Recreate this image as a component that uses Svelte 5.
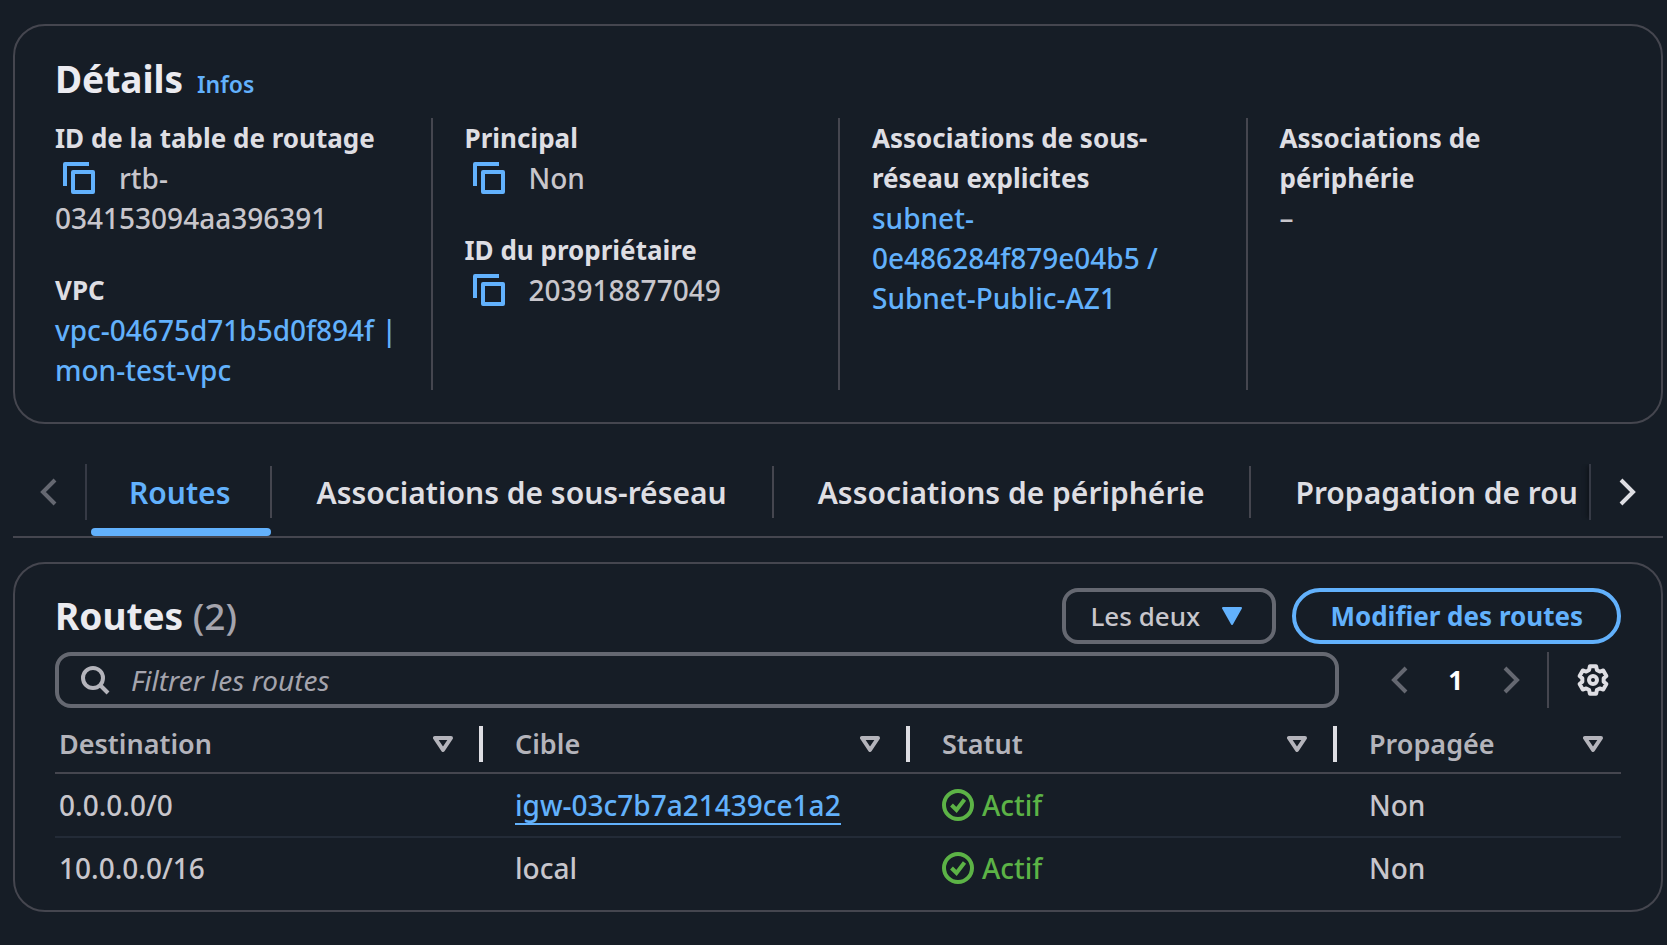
<script>
  const tabs = [
    'Routes',
    'Associations de sous-réseau',
    'Associations de périphérie',
    'Propagation de rou',
  ];
  let active = $state('Routes');
  let filter = $state('');
  let scope = $state('Les deux');

  const columns = ['Destination', 'Cible', 'Statut', 'Propagée'];
  const routes = [
    { destination: '0.0.0.0/0', target: 'igw-03c7b7a21439ce1a2', link: true, status: 'Actif', propagated: 'Non' },
    { destination: '10.0.0.0/16', target: 'local', link: false, status: 'Actif', propagated: 'Non' },
  ];
</script>

{#snippet copyButton(label)}
  <button class="copy" aria-label={label}>
    <svg viewBox="0 0 32 32" width="32" height="32" fill="none" stroke="currentColor" stroke-width="4" stroke-linejoin="round">
      <path d="M2 24V2h24" />
      <path d="M10 10h20v20H10z" />
    </svg>
  </button>
{/snippet}

{#snippet chevron(dir)}
  <svg class="chevron" viewBox="0 0 32 32" width="32" height="32" fill="none" stroke="currentColor" stroke-width="4">
    {#if dir === 'left'}
      <path d="M22 4 10 16l12 12" />
    {:else}
      <path d="M10 4l12 12-12 12" />
    {/if}
  </svg>
{/snippet}

<main>
  <section class="panel details">
    <header class="details-head">
      <h2>Détails</h2>
      <a class="info" href="#infos">Infos</a>
    </header>
    <div class="columns">
      <dl>
        <div>
          <dt>ID de la table de routage</dt>
          <dd>{@render copyButton('Copier l’ID de la table')}rtb-<wbr />034153094aa396391</dd>
        </div>
        <div>
          <dt>VPC</dt>
          <dd><a href="#vpc">vpc-04675d71b5d0f894f | mon-test-vpc</a></dd>
        </div>
      </dl>
      <dl>
        <div>
          <dt>Principal</dt>
          <dd>{@render copyButton('Copier la valeur')}Non</dd>
        </div>
        <div>
          <dt>ID du propriétaire</dt>
          <dd>{@render copyButton('Copier l’ID du propriétaire')}203918877049</dd>
        </div>
      </dl>
      <dl>
        <div>
          <dt>Associations de sous-réseau explicites</dt>
          <dd><a href="#subnet">subnet-<wbr />0e486284f879e04b5 / Subnet-Public-AZ1</a></dd>
        </div>
      </dl>
      <dl>
        <div>
          <dt>Associations de périphérie</dt>
          <dd>–</dd>
        </div>
      </dl>
    </div>
  </section>

  <nav class="tabs">
    <button class="scroll prev" aria-label="Onglets précédents" disabled>{@render chevron('left')}</button>
    <div class="tab-list" role="tablist">
      {#each tabs as tab}
        <button class="tab" class:active={tab === active} role="tab" aria-selected={tab === active} onclick={() => (active = tab)}>
          <span>{tab}</span>
        </button>
      {/each}
    </div>
    <button class="scroll next" aria-label="Onglets suivants">{@render chevron('right')}</button>
  </nav>

  <section class="panel routes">
    <header class="routes-head">
      <h2>Routes <span class="count">(2)</span></h2>
      <div class="actions">
        <div class="select">
          <select bind:value={scope} aria-label="Portée">
            <option>Les deux</option>
          </select>
          <svg viewBox="0 0 20 18" width="20" height="18" fill="currentColor" stroke="currentColor" stroke-width="2" stroke-linejoin="round">
            <path d="M1 1h18l-9 16z" />
          </svg>
        </div>
        <button class="edit">Modifier des routes</button>
      </div>
    </header>

    <div class="tools">
      <label class="search">
        <svg viewBox="0 0 32 32" width="32" height="32" fill="none" stroke="currentColor" stroke-width="4">
          <circle cx="14" cy="14" r="10" />
          <path d="M21 21l8 8" />
        </svg>
        <input type="search" placeholder="Filtrer les routes" aria-label="Filtrer les routes" bind:value={filter} />
      </label>
      <div class="pages">
        <button class="page-arrow" aria-label="Page précédente" disabled>{@render chevron('left')}</button>
        <button class="page">1</button>
        <button class="page-arrow" aria-label="Page suivante" disabled>{@render chevron('right')}</button>
      </div>
      <button class="settings" aria-label="Préférences">
        <svg viewBox="-16 -16 32 32" width="32" height="32" fill="none" stroke="currentColor" stroke-width="4" stroke-linejoin="round">
          <circle r="4" />
          <path d="M-3.150-13.640H3.150L3.870-10.080 6.800-8.390 10.240-9.550 13.390-4.090 10.670-1.690V1.690L13.390 4.090 10.240 9.550 6.800 8.390 3.870 10.080 3.150 13.640H-3.150L-3.870 10.080-6.800 8.390-10.240 9.550-13.390 4.090-10.670 1.690V-1.690L-13.390-4.090-10.240-9.550-6.800-8.390-3.870-10.080z" />
        </svg>
      </button>
    </div>

    <table>
      <thead>
        <tr>
          {#each columns as column}
            <th scope="col">
              <button class="sort">
                <span>{column}</span>
                <svg viewBox="0 0 20 18" width="20" height="18" fill="none" stroke="currentColor" stroke-width="4" stroke-linejoin="round">
                  <path d="M2 3h16l-8 12z" />
                </svg>
              </button>
            </th>
          {/each}
        </tr>
      </thead>
      <tbody>
        {#each routes as route}
          <tr>
            <td>{route.destination}</td>
            <td>
              {#if route.link}<a class="target" href="#igw">{route.target}</a>{:else}{route.target}{/if}
            </td>
            <td>
              <span class="status">
                <svg viewBox="0 0 32 32" width="32" height="32" fill="none" stroke="currentColor" stroke-width="4">
                  <circle cx="16" cy="16" r="14" />
                  <path d="M9.500 16l5 5 8-10.500" />
                </svg>
                {route.status}
              </span>
            </td>
            <td>{route.propagated}</td>
          </tr>
        {/each}
      </tbody>
    </table>
  </section>
</main>

<style>
  :global(body) {
    margin: 0;
    background: #161d26;
  }

  main {
    padding: 24px 4px 32px 13px;
    color: #c8c6cc;
    font: 500 28px/40px 'Noto Sans', 'Open Sans', sans-serif;
  }

  button,
  select,
  input {
    margin: 0;
    padding: 0;
    border: 0;
    background: none;
    color: inherit;
    font: inherit;
  }

  svg {
    display: block;
    flex: none;
  }

  h2,
  dl,
  dd {
    margin: 0;
  }

  h2 {
    color: #ebebf0;
    font-size: 37px;
    font-weight: 700;
    line-height: 50px;
  }

  a {
    color: #62b1fc;
    text-decoration: none;
  }

  .panel {
    box-sizing: border-box;
    border: 2px solid #45464f;
    border-radius: 32px;
    padding: 24px 40px 32px;
  }

  .details-head {
    display: flex;
    align-items: baseline;
    gap: 14px;
    padding: 4px 0 14px;
  }

  .info {
    font-size: 23px;
    font-weight: 600;
    line-height: 32px;
  }

  .columns {
    display: grid;
    grid-template-columns: repeat(4, minmax(0, 1fr));
    gap: 64px;
  }

  dl {
    display: flex;
    flex-direction: column;
    gap: 32px;
  }

  dl + dl {
    margin-left: -32px;
    border-left: 2px solid #45464f;
    padding-left: 32px;
  }

  dt {
    color: #dedee3;
    font-size: 26px;
    font-weight: 700;
  }

  .copy {
    display: inline-flex;
    margin: 0 24px 0 8px;
    vertical-align: -5px;
    color: #62b1fc;
  }

  .tabs {
    display: flex;
    margin-top: 40px;
    border-bottom: 2px solid #45464f;
    font-size: 30px;
    font-weight: 600;
    color: #dedee3;
  }

  .scroll {
    display: flex;
    align-items: center;
    justify-content: center;
    width: 74px;
    height: 56px;
  }

  .prev {
    border-right: 2px solid #363a45;
    color: #656871;
  }

  .next {
    border-left: 2px solid #363a45;
    box-shadow: -4px 0 4px -2px #0f141a;
    clip-path: inset(0 0 0 -8px);
  }

  .tab-list {
    display: flex;
    flex: 1;
    min-width: 0;
    overflow: hidden;
    padding-left: 4px;
  }

  .tab {
    flex: none;
    height: 72px;
    border-bottom: 8px solid transparent;
    padding-bottom: 8px;
    white-space: nowrap;
  }

  .tab span {
    display: block;
    border-right: 2px solid #45464f;
    padding: 7px 45px 5px 44px;
  }

  .tab:first-child span {
    padding: 7px 40px 5px 38px;
  }

  .tab:last-child span {
    border-right: 0;
    padding-right: 0;
  }

  .tab.active {
    position: relative;
    color: #62b1fc;
  }

  .tab.active::after {
    content: '';
    position: absolute;
    inset: auto 1px -8px 0;
    height: 8px;
    border-radius: 4px;
    background: #62b1fc;
  }

  .routes {
    margin-top: 24px;
    padding-bottom: 12px;
  }

  .routes-head,
  .actions {
    display: flex;
    align-items: center;
    gap: 16px;
  }

  .routes-head {
    justify-content: space-between;
    margin-bottom: 8px;
  }

  .count {
    color: #a4a4ad;
    font-weight: 500;
  }

  .select {
    position: relative;
    color: #62b1fc;
  }

  select {
    display: block;
    appearance: none;
    box-sizing: border-box;
    width: 214px;
    height: 56px;
    border: 4px solid #656871;
    border-radius: 16px;
    padding: 0 48px 0 24px;
    color: #c8c6cc;
    font-size: 26px;
  }

  .select svg {
    position: absolute;
    top: 19px;
    right: 34px;
    pointer-events: none;
  }

  .edit {
    height: 56px;
    border: 4px solid #62b1fc;
    border-radius: 28px;
    padding: 0 34px;
    color: #62b1fc;
    font-size: 26px;
    font-weight: 700;
  }

  .tools {
    display: flex;
    align-items: center;
  }

  .search {
    display: flex;
    flex: 1;
    align-items: center;
    gap: 20px;
    box-sizing: border-box;
    height: 56px;
    border: 4px solid #656871;
    border-radius: 16px;
    padding: 0 20px;
    color: #b4b4bb;
  }

  input {
    flex: 1;
    min-width: 0;
    outline: none;
  }

  input::placeholder {
    color: #a4a4ad;
    font-style: italic;
    font-weight: 400;
    opacity: 1;
  }

  .pages {
    display: flex;
    align-items: center;
    gap: 32px;
    padding: 0 20px 0 45px;
  }

  .page-arrow {
    color: #656871;
  }

  .page {
    color: #fff;
    font-size: 26px;
    font-weight: 700;
  }

  .settings {
    height: 56px;
    border-left: 2px solid #45464f;
    padding: 0 12px 0 28px;
    color: #dedee3;
  }

  table {
    width: 100%;
    margin-top: 8px;
    border-collapse: separate;
    border-spacing: 0;
    table-layout: fixed;
  }

  th {
    width: 427px;
    border-bottom: 2px solid #45464f;
    padding: 10px 0;
    color: #b4b4bb;
    font-size: 27px;
    font-weight: 600;
    text-align: left;
  }

  th:first-child {
    width: 428px;
  }

  th:last-child {
    width: auto;
  }

  .sort {
    display: flex;
    align-items: center;
    justify-content: space-between;
    box-sizing: border-box;
    width: 100%;
    height: 36px;
    border-right: 4px solid #dedee3;
    padding: 0 26px 0 32px;
  }

  th:last-child .sort {
    border-right: 0;
    padding-right: 18px;
  }

  td {
    height: 60px;
    padding: 0 0 0 32px;
  }

  td:first-child,
  th:first-child .sort {
    padding-left: 4px;
  }

  tbody tr:not(:last-child) td {
    height: 62px;
    border-bottom: 2px solid #232b37;
  }

  .target {
    display: inline-block;
    border-bottom: 2px solid #62b1fc;
    line-height: 36px;
  }

  .status {
    display: flex;
    align-items: center;
    gap: 8px;
    color: #5cb346;
  }
</style>
